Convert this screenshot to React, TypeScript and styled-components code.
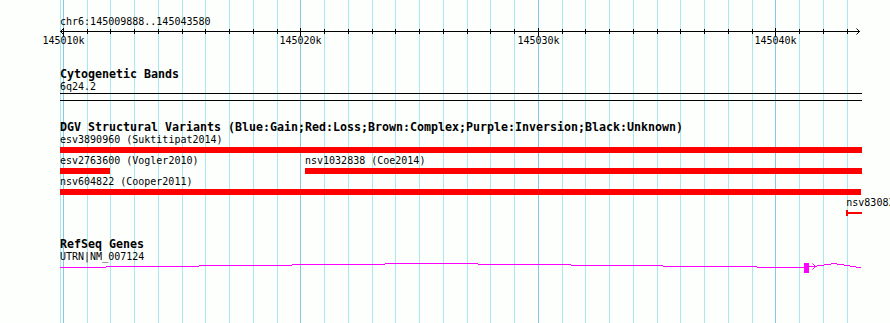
import React from "react";
import styled, { createGlobalStyle } from "styled-components";

// view: chr6:145009888..145043580
const VIEW_START = 145009888;
const VIEW_END = 145043580;
const PX_PER_BP = 0.023743;
const ORIGIN_BP = 145010000;
const ORIGIN_X = 63;
const LEFT = 60;
const RIGHT = 862;

const toX = (bp: number) => ORIGIN_X + (bp - ORIGIN_BP) * PX_PER_BP;
const clampX = (x: number) => Math.min(RIGHT, Math.max(LEFT, x));

const GlobalStyle = createGlobalStyle`
  html, body {
    margin: 0;
    padding: 0;
    background: #fdfffd;
  }
  body {
    width: 890px;
    height: 323px;
    overflow: hidden;
  }
`;

const Browser = styled.div`
  position: relative;
  width: 890px;
  height: 323px;
  overflow: hidden;
  background: #fdfffd;
  color: #000;
  font-family: "DejaVu Sans Mono", "Liberation Mono", monospace;
`;

const GridLayer = styled.svg`
  position: absolute;
  left: 0;
  top: 0;
  z-index: 0;
  display: block;
`;

const Tracks = styled.div`
  position: relative;
  z-index: 1;
`;

const RulerTrack = styled.section`
  padding-top: 15px;
`;

const Coords = styled.div`
  padding-left: 60px;
  height: 13px;
  font-size: 10px;
  line-height: 13px;
  white-space: nowrap;
`;

const Axis = styled.svg`
  display: block;
  overflow: visible;
`;

const Track = styled.section<{ $gap: number }>`
  margin-top: ${(p) => p.$gap}px;
`;

const TrackTitle = styled.div`
  padding-left: 60px;
  height: 13px;
  font-size: 11.63px;
  font-weight: bold;
  line-height: 13px;
  white-space: nowrap;
`;

const TrackLabel = styled.div`
  padding-left: 60px;
  height: 11px;
  font-size: 10px;
  line-height: 11px;
  white-space: nowrap;
`;

const Chromosome = styled.div`
  box-sizing: border-box;
  margin: 1px 0 0 60px;
  width: 802px;
  height: 8px;
  border-top: 1px solid #000;
  border-bottom: 1px solid #000;
`;

const FeatureRow = styled.div`
  position: relative;
  height: 21px;
`;

const Feature = styled.div`
  position: absolute;
  top: 0;
  display: flex;
  flex-direction: column;
`;

const FeatureLabel = styled.div`
  height: 11px;
  font-size: 10px;
  line-height: 11px;
  white-space: nowrap;
`;

const Bar = styled.div<{ $stub?: boolean }>`
  box-sizing: border-box;
  margin-top: 2px;
  height: 6px;
  background: ${(p) =>
    p.$stub
      ? "linear-gradient(#ff0000, #ff0000) no-repeat 0 2px / 100% 2px"
      : "#ff0000"};
  border-left: ${(p) => (p.$stub ? "2px solid #ff0000" : "none")};
`;

const GeneGlyph = styled.svg`
  display: block;
`;

type Variant = { id: string; study?: string; start: number; end: number; stub?: boolean };

const dgvRows: Variant[][] = [
  [{ id: "esv3890960", study: "Suktitipat2014", start: 145000000, end: 145100000 }],
  [
    { id: "esv2763600", study: "Vogler2010", start: 145005000, end: 145011980 },
    { id: "nsv1032838", study: "Coe2014", start: 145020192, end: 145100000 },
  ],
  [{ id: "nsv604822", study: "Cooper2011", start: 145000000, end: 145043610 }],
  [{ id: "nsv830831", start: 145042990, end: 145100000, stub: true }],
];

// intron drawn as shallow hat, rows are page y
const intronSteps: [number, number, number][] = [
  [267, 60, 106],
  [266, 106, 199],
  [265, 199, 292],
  [264, 292, 385],
  [263, 385, 478],
  [264, 478, 571],
  [265, 571, 663],
  [266, 663, 757],
  [267, 757, 804],
  [266, 809, 817],
  [265, 817, 824],
  [264, 824, 831],
  [263, 831, 837],
  [264, 837, 844],
  [265, 844, 850],
  [266, 850, 856],
  [267, 856, 861],
];
const GENE_TOP = 262;

function Grid() {
  const lines: JSX.Element[] = [
    <line key="start" x1={LEFT + 0.5} x2={LEFT + 0.5} y1={0} y2={323} stroke="#a8e8ee" />,
  ];
  for (let bp = ORIGIN_BP; bp <= VIEW_END; bp += 1000) {
    const x = Math.round(toX(bp)) + 0.5;
    const major = (bp / 1000) % 10 === 0;
    lines.push(
      <line key={bp} x1={x} x2={x} y1={0} y2={323} stroke={major ? "#86c8e6" : "#a8e8ee"} />
    );
  }
  return (
    <GridLayer width={890} height={323}>
      {lines}
    </GridLayer>
  );
}

function Ruler() {
  const ticks: JSX.Element[] = [];
  for (let bp = ORIGIN_BP; bp <= VIEW_END; bp += 1000) {
    const x = Math.round(toX(bp)) + 0.5;
    const major = (bp / 1000) % 10 === 0;
    ticks.push(
      <line key={bp} x1={x} x2={x} y1={major ? 0 : 1} y2={major ? 8 : 6} stroke="#000" />
    );
    if (major) {
      ticks.push(
        <text key={`l${bp}`} x={x} y={16} textAnchor="middle" fontSize={10}
          fontFamily='"DejaVu Sans Mono", "Liberation Mono", monospace'>
          {bp / 1000}k
        </text>
      );
    }
  }
  const x1 = Math.round(toX(VIEW_START));
  const x2 = Math.round(toX(VIEW_END));
  return (
    <RulerTrack>
      <Coords>chr6:{VIEW_START}..{VIEW_END}</Coords>
      <Axis width={890} height={20}>
        <line x1={x1} x2={x2} y1={3.5} y2={3.5} stroke="#000" />
        <path d={`M${x1 + 3.5} 0.5 L${x1 + 0.5} 3.5 L${x1 + 3.5} 6.5`} fill="none" stroke="#000" />
        <path d={`M${x2 - 3.5} 0.5 L${x2 - 0.5} 3.5 L${x2 - 3.5} 6.5`} fill="none" stroke="#000" />
        {ticks}
      </Axis>
    </RulerTrack>
  );
}

function DgvTrack() {
  return (
    <Track $gap={20}>
      <TrackTitle>
        DGV Structural Variants (Blue:Gain;Red:Loss;Brown:Complex;Purple:Inversion;Black:Unknown)
      </TrackTitle>
      {dgvRows.map((row, i) => (
        <FeatureRow key={i}>
          {row.map((v) => {
            const left = clampX(toX(v.start));
            const width = clampX(toX(v.end)) - left;
            return (
              <Feature key={v.id} style={{ left, width }}>
                <FeatureLabel>
                  {v.id}
                  {v.study ? ` (${v.study})` : ""}
                </FeatureLabel>
                <Bar $stub={v.stub} />
              </Feature>
            );
          })}
        </FeatureRow>
      ))}
    </Track>
  );
}

function RefSeqTrack() {
  return (
    <Track $gap={20}>
      <TrackTitle>RefSeq Genes</TrackTitle>
      <TrackLabel>UTRN|NM_007124</TrackLabel>
      <GeneGlyph width={890} height={12}>
        {intronSteps.map(([row, a, b]) => (
          <rect key={`${row}-${a}`} x={a} y={row - GENE_TOP} width={b - a} height={1} fill="#ff00ff" />
        ))}
        <rect x={804} y={1} width={5} height={10} fill="#ff00ff" />
        <path d="M812.5 1.5 L815.5 4.5 L812.5 7.5" fill="none" stroke="#ff00ff" />
      </GeneGlyph>
    </Track>
  );
}

export default function App() {
  return (
    <>
      <GlobalStyle />
      <Browser>
        <Grid />
        <Tracks>
          <Ruler />
          <Track $gap={20}>
            <TrackTitle>Cytogenetic Bands</TrackTitle>
            <TrackLabel>6q24.2</TrackLabel>
            <Chromosome />
          </Track>
          <DgvTrack />
          <RefSeqTrack />
        </Tracks>
      </Browser>
    </>
  );
}
